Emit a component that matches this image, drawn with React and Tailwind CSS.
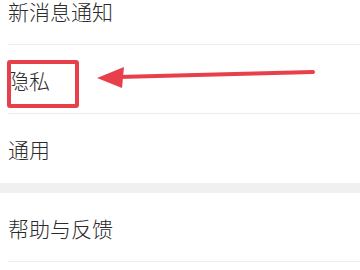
import React from 'react';

const rows = ['新消息通知', '隐私', '通用'];

function Row({ label, divider = true }) {
    return (
        <div className={`ml-2 flex h-[69px] items-center ${divider ? 'border-b border-[#ececec]' : ''}`}>
            <span className="pt-[2px] text-[21px] font-light leading-none text-[#2b2b2b]">{label}</span>
        </div>
    );
}

export default function App() {
    return (
        <div
            className="relative h-[270px] w-[360px] overflow-hidden bg-white"
            style={{ fontFamily: '"Noto Sans CJK SC", "Noto Sans", sans-serif' }}
        >
            <div className="mt-[-24px]">
                {rows.map((r, i) => (
                    <Row key={r} label={r} divider={i < rows.length - 1} />
                ))}
                <div className="h-[10px] bg-[#f0f0f0]" />
                <Row label="帮助与反馈" />
            </div>

            {/* annotation: highlight box + arrow */}
            <div className="absolute left-[7px] top-[60px] h-[48px] w-[72px] rounded-[3px] border-4 border-[#e8404b]" />
            <svg className="absolute left-0 top-0" width="360" height="270" viewBox="0 0 360 270">
                <line x1="118" y1="77" x2="313" y2="72" stroke="#e8404b" strokeWidth="4" strokeLinecap="round" />
                <polygon points="97,78 124,67 122,88" fill="#e8404b" />
            </svg>
        </div>
    );
}
